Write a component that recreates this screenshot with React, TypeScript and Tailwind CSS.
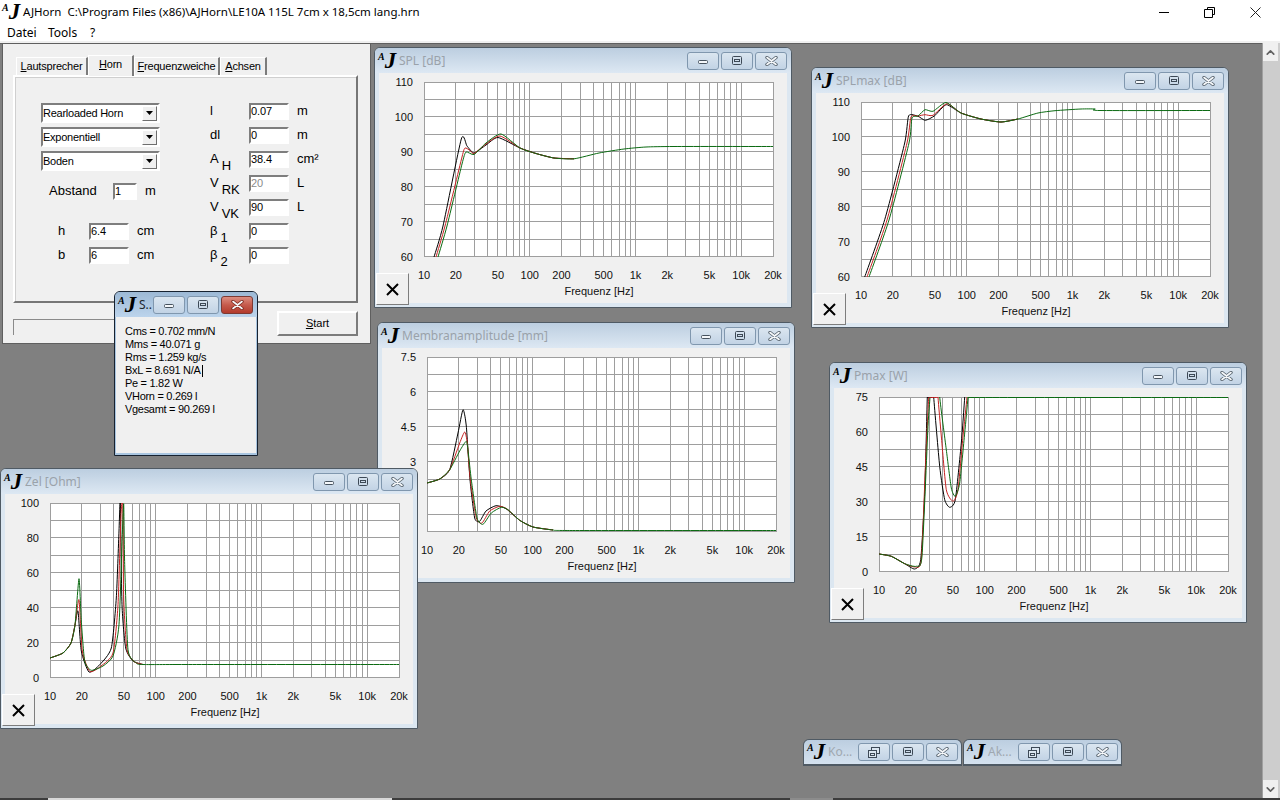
import type { ReactNode } from "react"
import { ChevronDown, ChevronUp } from "lucide-react"

type Pt = [number, number]

const PLOT_W = 349
const PLOT_H = 174.5

const logX = (f: number) => (PLOT_W * Math.log10(f / 10)) / Math.log10(2000)

// vertical grid: 1..9 per decade, then 10k and 20k
const gridFreqs = [
  10, 20, 30, 40, 50, 60, 70, 80, 90, 100, 200, 300, 400, 500, 600, 700, 800, 900, 1000, 2000, 3000, 4000, 5000, 6000,
  7000, 8000, 9000, 10000, 20000,
]

const xLabels: [string, number][] = [
  ["10", 10],
  ["20", 20],
  ["50", 50],
  ["100", 100],
  ["200", 200],
  ["500", 500],
  ["1k", 1000],
  ["2k", 2000],
  ["5k", 5000],
  ["10k", 10000],
  ["20k", 20000],
]

// Catmull-Rom through the points, soft enough to keep the peaks from overshooting much
function toPath(pts: Pt[]) {
  let d = `M${pts[0][0]} ${pts[0][1]}`
  for (let i = 0; i < pts.length - 1; i++) {
    const p0 = pts[Math.max(i - 1, 0)]
    const p1 = pts[i]
    const p2 = pts[i + 1]
    const p3 = pts[Math.min(i + 2, pts.length - 1)]
    const k = 0.1
    d += ` C${p1[0] + (p2[0] - p0[0]) * k} ${p1[1] + (p2[1] - p0[1]) * k} ${p2[0] - (p3[0] - p1[0]) * k} ${
      p2[1] - (p3[1] - p1[1]) * k
    } ${p2[0]} ${p2[1]}`
  }
  return d
}

// black and red stop where the three curves have merged, green runs on to the end
const splTail: Pt[] = [[96, 66], [112, 71.5], [130, 76], [150, 76.8]]
const splEnd: Pt[] = [[175, 71], [200, 67], [222, 65], [250, 64.5], [349, 64.5]]
const splCurves: Pt[][] = [
  [[10, 175], [19, 144], [37.3, 57], [43, 64], [50, 71], [62, 63], [74, 55.5], ...splTail],
  [[12, 175], [21, 144], [38, 75], [41, 66], [46, 68.5], [50, 71.5], [62, 62], [76, 54], ...splTail],
  [[14, 175], [23, 144], [38, 82], [42, 70], [50, 72.5], [62, 61], [77, 52], ...splTail, ...splEnd],
]

const maxTail: Pt[] = [[100, 11], [120, 17], [140, 20], [157, 17]]
const maxEnd: Pt[] = [[177, 11], [194, 8.7], [220, 7], [234, 7], [238, 8.5], [349, 8.5]]
const splMaxCurves: Pt[][] = [
  [[3.7, 175], [23.7, 117.7], [43.7, 41], [47.7, 13.7], [57, 14.3], [64.3, 18.3], [73.7, 13.7], [85.3, 2.7], ...maxTail],
  [[6, 175], [26, 118], [46, 41], [50, 15], [57, 14], [64, 12.7], [72, 13.3], [86, 1.7], ...maxTail],
  [[8, 175], [28, 118], [48, 41], [51, 16], [57, 14], [64, 7.7], [72, 9.3], [85, 0.5], ...maxTail, ...maxEnd],
]

const membHead: Pt[] = [[0, 126], [12.7, 122], [22.7, 112.7]]
const membTail: Pt[] = [[92.7, 163.3], [106, 170], [126, 173]]
const membCurves: Pt[][] = [
  [...membHead, [31, 76], [36, 52.7], [39.3, 69], [43, 122.7], [47.7, 161], [52.7, 164.3], [59, 154], [69, 148.7], [79, 151.7], ...membTail],
  [...membHead, [32.7, 86], [37.7, 75], [40.3, 86], [43.3, 122.7], [49.3, 161], [55, 166], [62.7, 154], [72.7, 149.3], [80, 152], ...membTail],
  [...membHead, [32.7, 94], [39.3, 84.3], [41.3, 96], [44.3, 122.7], [50, 161], [56, 167.3], [64.3, 156], [74.3, 150.3], [81, 152.7], ...membTail, [142.7, 173.5], [349, 173.5]],
]

const zelHead: Pt[] = [[0, 155], [13, 150], [21, 140], [25, 122]]
const zelTail: Pt[] = [[93, 161.5], [136, 161.5], [349, 161.5]]
const zelCurves: Pt[][] = [
  [...zelHead, [28, 108], [31.3, 148], [39, 169], [49.7, 161.7], [61.3, 145], [66.3, 95], [69, 28], [70.3, 0], [72, 101.7], [75.7, 145], [83, 158], [93, 161.5]],
  [...zelHead, [29, 96.7], [32.3, 148], [40, 168.5], [51, 163], [63, 150], [68, 101.7], [71, 11.7], [72.7, 0], [73.7, 95], [77, 146.7], [84.7, 159], [93, 161.5]],
  [...zelHead, [29, 75.7], [31.3, 118], [34.7, 158], [41.3, 167.3], [53, 163], [63, 153], [69, 121.7], [72.3, 31.7], [73.7, 1], [74.7, 61.7], [78, 146.7], [86.3, 160], ...zelTail],
]

// the curves leave the plot at the top and get clipped, the clipped stretch is drawn as flat lines after them
const pmaxHead: Pt[] = [[0, 157], [12.3, 159.3], [25.7, 166.7]]
const pmaxCurves: Pt[][] = [
  [...pmaxHead, [35.7, 172], [41.7, 162.7], [45.7, 96], [48.3, 0], [49.5, -30], [53.5, -30], [54.7, 0], [60.7, 69.3], [65.7, 102.7], [70.7, 110.3], [76.3, 102.7], [82.3, 46], [85.7, 0], [87, -30]],
  [...pmaxHead, [36.3, 170], [42.3, 162.7], [46.7, 62.7], [49.7, 0], [51, -30], [57.5, -30], [59, 0], [62.3, 39], [67.3, 92.7], [74, 104.3], [79, 92.7], [84, 39], [88, 0], [89.5, -30]],
  [...pmaxHead, [37.3, 169.3], [43, 159], [49, 29.3], [51, 0], [52, -30], [59.5, -30], [60.7, 0], [67.3, 52.7], [72.3, 91], [76.3, 99.3], [80.7, 86], [85.7, 36], [89, 0], [90.5, -30]],
  [[48.3, 0.5], [54.7, 0.5]],
  [[49.7, 0.5], [59, 0.5]],
  [[89, 0.5], [349, 0.5]],
]

const curveColors = ["#000000", "#c42222", "#0b6a12"]

function Logo({ className = "" }: { className?: string }) {
  return (
    <span className={`flex items-start leading-none text-black [font-family:'Liberation_Serif',serif] italic font-bold ${className}`}>
      <span className="text-[10px] leading-none">A</span>
      <span className="text-[23px] leading-[18px]">J</span>
    </span>
  )
}

function CaptionGlyph({ kind, active }: { kind: string; active?: boolean }) {
  if (kind === "min") {
    return (
      <svg width="12" height="6" className="mt-[3px]">
        <rect x="1.5" y="1.5" width="9" height="3" rx="1" fill="#f4f7fa" stroke="#46525e" />
      </svg>
    )
  }
  if (kind === "max") {
    return (
      <svg width="12" height="10">
        <rect x="1.5" y="0.5" width="9" height="8" rx="1" fill="none" stroke="#3d4956" />
        <rect x="3.5" y="3.5" width="5" height="2" fill="none" stroke="#3d4956" />
      </svg>
    )
  }
  if (kind === "restore") {
    return (
      <svg width="12" height="11">
        <rect x="3.5" y="0.5" width="8" height="6" fill="#dbe6f0" stroke="#3d4956" />
        <rect x="0.5" y="3.5" width="8" height="7" fill="#dbe6f0" stroke="#3d4956" />
        <rect x="2.5" y="6.5" width="4" height="2" fill="none" stroke="#3d4956" />
      </svg>
    )
  }
  return (
    <svg width="13" height="10">
      <path d="M2 1.5 L11 8.5 M11 1.5 L2 8.5" stroke={active ? "#7c2a20" : "#58646f"} strokeWidth="3.4" strokeLinecap="round" />
      <path d="M2 1.5 L11 8.5 M11 1.5 L2 8.5" stroke="#f7f9fb" strokeWidth="1.6" strokeLinecap="round" />
    </svg>
  )
}

function CaptionButton({ kind, danger }: { kind: string; danger?: boolean }) {
  return (
    <div
      className={`flex h-[18px] w-[32px] items-center justify-center rounded-[3px] border ${
        danger
          ? "border-[#7c3a34] bg-gradient-to-b from-[#dc8d80] via-[#c55a4c] to-[#b23a2c]"
          : "border-[#8097ae] bg-gradient-to-b from-[#dbe6f0] to-[#c2d3e5]"
      }`}
    >
      <CaptionGlyph kind={kind} active={danger} />
    </div>
  )
}

function Chart({ yLabels, curves }: { yLabels: string[]; curves: Pt[][] }) {
  const px = 45
  const py = 9
  const clipId = `clip-${yLabels[0]}-${curves[0][0][0]}`
  return (
    <svg width="408" height="230" className="block">
      <defs>
        <clipPath id={clipId}>
          <rect x="0" y="0" width={PLOT_W + 1} height={PLOT_H + 1} />
        </clipPath>
      </defs>
      <g transform={`translate(${px} ${py})`}>
        <rect x="0" y="0" width={PLOT_W} height={PLOT_H} fill="#ffffff" />
        <g stroke="#9e9e9e" strokeWidth="1" shapeRendering="crispEdges">
          {Array.from({ length: 11 }, (_, i) => (
            <line key={i} x1="0" x2={PLOT_W} y1={(i * PLOT_H) / 10} y2={(i * PLOT_H) / 10} />
          ))}
          {gridFreqs.map((f) => (
            <line key={f} x1={logX(f)} x2={logX(f)} y1="0" y2={PLOT_H} />
          ))}
        </g>
        <g clipPath={`url(#${clipId})`} fill="none" strokeWidth="1">
          {curves.map((c, i) => (
            <path key={i} d={toPath(c)} stroke={curveColors[i % 3]} />
          ))}
        </g>
        <g fontSize="11" fill="#111111">
          {yLabels.map((t, i) => (
            <text key={t} x="-11" y={(i * PLOT_H) / 5 + 4} textAnchor="end">
              {t}
            </text>
          ))}
          {xLabels.map(([t, f]) => (
            <text key={t} x={logX(f)} y={PLOT_H + 22} textAnchor="middle">
              {t}
            </text>
          ))}
          <text x="175" y={PLOT_H + 38} textAnchor="middle">
            Frequenz [Hz]
          </text>
        </g>
      </g>
    </svg>
  )
}

function ChartWindow({ title, className, yLabels, curves }: { title: string; className: string; yLabels: string[]; curves: Pt[][] }) {
  return (
    <div className={`absolute h-[261px] w-[418px] rounded-t-[6px] border border-[#4f5a64] bg-[#dce7f1] ${className}`}>
      <div className="flex h-[25px] items-center rounded-t-[5px] bg-gradient-to-b from-[#bccee0] to-[#dde8f3] pl-[3px] pr-1">
        <Logo className="w-[21px] shrink-0" />
        <span className="flex-1 truncate text-[12px] text-[#9aa2aa] [font-family:'Noto_Sans',sans-serif]">{title}</span>
        <div className="flex gap-[2px]">
          <CaptionButton kind="min" />
          <CaptionButton kind="max" />
          <CaptionButton kind="close" />
        </div>
      </div>
      <div className="border-x-4 border-b-4 border-[#dce7f1] bg-[#f0f0f0]">
        <Chart yLabels={yLabels} curves={curves} />
      </div>
      <button className="absolute bottom-[2px] left-[1px] flex h-[32px] w-[33px] items-center justify-center border border-b-[#7d7d7d] border-l-white border-r-[#7d7d7d] border-t-white bg-[#f0f0f0]">
        <svg width="15" height="15">
          <path d="M2 2 L13 13 M13 2 L2 13" stroke="#000" strokeWidth="2" />
        </svg>
      </button>
    </div>
  )
}

function MinimizedWindow({ title, className }: { title: string; className: string }) {
  return (
    <div className={`absolute flex h-[27px] w-[159px] items-center rounded-t-[6px] border border-b-2 border-[#4f5a64] bg-gradient-to-b from-[#bccee0] to-[#d5e2ef] pl-[3px] pr-[3px] ${className}`}>
      <Logo className="w-[21px] shrink-0" />
      <span className="flex-1 text-[12px] text-[#a0a8b0] [font-family:'Noto_Sans',sans-serif]">{title}</span>
      <div className="flex gap-[2px]">
        <CaptionButton kind="restore" />
        <CaptionButton kind="max" />
        <CaptionButton kind="close" />
      </div>
    </div>
  )
}

function Field({ value, className = "w-10", disabled }: { value: string; className?: string; disabled?: boolean }) {
  return (
    <div
      className={`flex h-[17px] items-center border-2 border-b-white border-l-[#7e7e7e] border-r-white border-t-[#7e7e7e] bg-white text-[11px] tracking-[-0.1px] ${className} ${
        disabled ? "text-[#8a8a8a]" : "text-black"
      }`}
    >
      {value}
    </div>
  )
}

function Combo({ value }: { value: string }) {
  return (
    <div className="flex h-5 w-[119px] items-center justify-between border-2 border-b-white border-l-[#7e7e7e] border-r-white border-t-[#7e7e7e] bg-white text-[11px] tracking-[-0.25px]">
      {value}
      <div className="mr-px flex h-[15px] w-[15px] items-center justify-center border border-b-[#6e6e6e] border-l-white border-r-[#6e6e6e] border-t-white bg-[#f0f0f0]">
        <svg width="7" height="4">
          <path d="M0 0 H7 L3.5 4 Z" fill="#000" />
        </svg>
      </div>
    </div>
  )
}

function Tab({ children, active, className }: { children: ReactNode; active?: boolean; className: string }) {
  return (
    <div
      className={`flex items-center justify-center text-[11px] tracking-[-0.2px] ${className} ${
        active
          ? "z-10 -mb-px h-[21px] border-l border-r-2 border-t border-l-white border-r-[#7c7c7c] border-t-white bg-[#f0f0f0] pb-[3px]"
          : "h-[18px] border-l border-r-2 border-t border-l-white border-r-[#7c7c7c] border-t-white"
      }`}
    >
      {children}
    </div>
  )
}

function ParamRow({ label, sub, unit, value, disabled }: { label: string; sub?: string; unit?: string; value: string; disabled?: boolean }) {
  return (
    <div className="flex h-[16px] items-center text-[13px]">
      <div className="flex w-[39px]">
        <span>{label}</span>
        {sub && <span className="ml-[3px] translate-y-[7px]">{sub}</span>}
      </div>
      <Field value={value} disabled={disabled} />
      {unit && <span className="ml-2">{unit}</span>}
    </div>
  )
}

function HornForm() {
  return (
    <div className="absolute left-[2px] top-[44px] flex h-[300px] w-[369px] flex-col border-l border-r border-b border-[#5f5f5f] bg-[#f0f0f0] pl-[10px] pr-[12px] pt-[11px]">
      <div className="flex h-[20px] items-end pl-[3px]">
        <Tab className="w-[72px]">
          <span><u>L</u>autsprecher</span>
        </Tab>
        <Tab active className="w-[46px]">
          <span><u>H</u>orn</span>
        </Tab>
        <Tab className="w-[86px]">
          <span><u>F</u>requenzweiche</span>
        </Tab>
        <Tab className="w-[47px]">
          <span><u>A</u>chsen</span>
        </Tab>
      </div>
      <div className="flex h-[228px] w-[345px] border-2 border-b-[#767676] border-l-white border-r-[#767676] border-t-white pl-[26px] pt-[26px] shadow-[inset_1px_1px_0_#cfcfcf]">
        <div className="flex w-[169px] flex-col text-[13px]">
          <div className="flex flex-col gap-1">
            <Combo value="Rearloaded Horn" />
            <Combo value="Exponentiell" />
            <Combo value="Boden" />
          </div>
          <div className="ml-2 mt-3 flex h-4 items-center">
            <span className="w-[64px]">Abstand</span>
            <Field value="1" className="w-6" />
            <span className="ml-2">m</span>
          </div>
          <div className="ml-[17px] mt-6 flex h-4 items-center">
            <span className="w-[31px]">h</span>
            <Field value="6.4" />
            <span className="ml-2">cm</span>
          </div>
          <div className="ml-[17px] mt-2 flex h-4 items-center">
            <span className="w-[31px]">b</span>
            <Field value="6" />
            <span className="ml-2">cm</span>
          </div>
        </div>
        <div className="flex flex-col gap-2">
          <ParamRow label="l" value="0.07" unit="m" />
          <ParamRow label="dl" value="0" unit="m" />
          <ParamRow label="A" sub="H" value="38.4" unit="cm²" />
          <ParamRow label="V" sub="RK" value="20" unit="L" disabled />
          <ParamRow label="V" sub="VK" value="90" unit="L" />
          <ParamRow label="β" sub="1" value="0" />
          <ParamRow label="β" sub="2" value="0" />
        </div>
      </div>
      <div className="mt-2 flex items-start justify-between">
        <div className="mt-[8px] h-[16px] w-[240px] border-l border-t border-[#8a8a8a]" />
        <button className="flex h-[25px] w-[81px] items-center justify-center border-2 border-b-[#7c7c7c] border-l-white border-r-[#7c7c7c] border-t-white bg-[#f0f0f0] text-[11px]">
          <span><u>S</u>tart</span>
        </button>
      </div>
    </div>
  )
}

function ResultWindow() {
  const lines = ["Cms = 0.702 mm/N", "Mms = 40.071 g", "Rms = 1.259 kg/s", "BxL = 8.691 N/A", "Pe = 1.82 W", "VHorn = 0.269 l", "Vgesamt = 90.269 l"]
  return (
    <div className="absolute left-[114px] top-[291px] h-[165px] w-[144px] rounded-t-[6px] border border-[#172230] bg-[#a9c5e0]">
      <div className="flex h-[25px] items-center rounded-t-[5px] bg-gradient-to-b from-[#9db9d5] to-[#bcd4ec] pl-[3px] pr-1">
        <Logo className="w-[21px] shrink-0" />
        <span className="flex-1 text-[12px] text-[#20262c] [font-family:'Noto_Sans',sans-serif]">S..</span>
        <div className="flex gap-[2px]">
          <CaptionButton kind="min" />
          <CaptionButton kind="max" />
          <CaptionButton kind="close" danger />
        </div>
      </div>
      <div className="mx-[1px] h-[136px] bg-[#f0f0f0] pl-[9px] pt-[8px] text-[11px] leading-[13px] tracking-[-0.3px]">
        {lines.map((l, i) => (
          <div key={l} className="flex items-center whitespace-pre">
            {l}
            {i === 3 && <span className="ml-px inline-block h-[12px] w-px bg-black" />}
          </div>
        ))}
      </div>
    </div>
  )
}

export default function App() {
  return (
    <div className="relative flex h-[800px] w-[1280px] flex-col overflow-hidden bg-white text-black [font-family:'Liberation_Sans',sans-serif]">
      <div className="flex h-[24px] shrink-0 items-center pl-[2px] [font-family:'Noto_Sans',sans-serif]">
        <Logo className="w-[21px] shrink-0" />
        <span className="whitespace-pre text-[11.5px]">AJHorn  C:\Program Files (x86)\AJHorn\LE10A 115L 7cm x 18,5cm lang.hrn</span>
        <div className="ml-auto flex items-center">
          <svg width="10" height="10" className="mr-[35px]">
            <path d="M0 5.5 H10" stroke="#000" />
          </svg>
          <svg width="11" height="11" className="mr-[35px]">
            <path d="M3.5 2.5 V0.5 H10.5 V7.5 H8.5 M0.5 2.5 H8.5 V10.5 H0.5 Z" fill="none" stroke="#000" />
          </svg>
          <svg width="11" height="11" className="mr-[19px]">
            <path d="M0.5 0.5 L10.5 10.5 M10.5 0.5 L0.5 10.5" stroke="#222" />
          </svg>
        </div>
      </div>
      <div className="flex h-[17px] shrink-0 items-center pl-[7px] text-[12px] [font-family:'Noto_Sans',sans-serif]">
        <span className="w-[41px]">Datei</span>
        <span className="w-[42px]">Tools</span>
        <span>?</span>
      </div>
      <div className="h-[2px] shrink-0 bg-[#f0f0f0]" />
      <div className="flex min-h-0 flex-1">
        <div className="flex-1 border-t border-[#5f5f5f] bg-[#808080]" />
        <div className="flex w-[18px] flex-col border-l border-[#a0a0a0] bg-[#cdcdcd] pr-[2px]">
          <div className="flex h-[18px] items-center justify-center bg-[#f0f0f0]">
            <ChevronUp size={13} strokeWidth={3} className="text-[#606060]" />
          </div>
          <div className="flex-1" />
          <div className="flex h-[18px] items-center justify-center bg-[#f0f0f0]">
            <ChevronDown size={13} strokeWidth={3} className="text-[#606060]" />
          </div>
        </div>
      </div>
      <div className="flex h-[2px] shrink-0 bg-[#3c3c3c]">
        <div className="ml-[48px] w-[344px] bg-[#d8d8d8]" />
        <div className="ml-[398px] w-[43px] bg-[#8c8c8c]" />
      </div>

      <HornForm />
      <ChartWindow title="SPL [dB]" className="left-[374px] top-[47px]" yLabels={["110", "100", "90", "80", "70", "60"]} curves={splCurves} />
      <ChartWindow title="Membranamplitude [mm]" className="left-[377px] top-[322px]" yLabels={["7.5", "6", "4.5", "3", "1.5", "0"]} curves={membCurves} />
      <ChartWindow title="SPLmax [dB]" className="left-[811px] top-[67px]" yLabels={["110", "100", "90", "80", "70", "60"]} curves={splMaxCurves} />
      <ChartWindow title="Pmax [W]" className="left-[829px] top-[362px]" yLabels={["75", "60", "45", "30", "15", "0"]} curves={pmaxCurves} />
      <ChartWindow title="Zel [Ohm]" className="left-[0px] top-[468px]" yLabels={["100", "80", "60", "40", "20", "0"]} curves={zelCurves} />
      <ResultWindow />
      <MinimizedWindow title="Ko..." className="left-[803px] top-[739px]" />
      <MinimizedWindow title="Ak..." className="left-[963px] top-[739px]" />
    </div>
  )
}
